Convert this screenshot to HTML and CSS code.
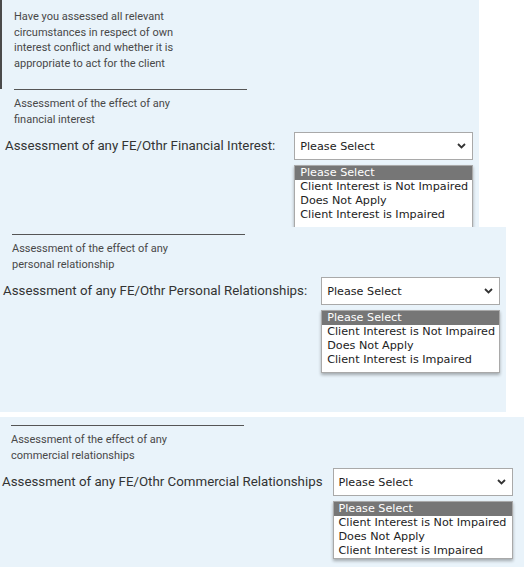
FILE: index.html
```html
<!DOCTYPE html>
<html lang="en">
<head>
    <meta charset="UTF-8">
    <meta name="viewport" content="width=device-width, initial-scale=1.0">
    <title>Conflict Assessment</title>
    <link rel="stylesheet" href="styles.css">
</head>
<body>
    <div class="panel panel-financial">
        <div class="intro">
            <p class="note">Have you assessed all relevant<br>circumstances in respect of own<br>interest conflict and whether it is<br>appropriate to act for the client</p>
        </div>
        <div class="rule"></div>
        <p class="note sub">Assessment of the effect of any<br>financial interest</p>
        <div class="field">
            <label class="field-label">Assessment of any FE/Othr Financial Interest:</label>
            <div class="picker">
                <div class="select">
                    <span>Please Select</span>
                    <svg class="chevron" width="9" height="6" viewBox="0 0 9 6"><polyline points="1,1 4.5,4.5 8,1" fill="none" stroke="#333" stroke-width="1.8"/></svg>
                </div>
                <ul class="listbox listbox-open">
                    <li class="active">Please Select</li>
                    <li>Client Interest is Not Impaired</li>
                    <li>Does Not Apply</li>
                    <li>Client Interest is Impaired</li>
                </ul>
            </div>
        </div>
    </div>

    <div class="panel panel-personal">
        <div class="rule"></div>
        <p class="note sub">Assessment of the effect of any<br>personal relationship</p>
        <div class="field">
            <label class="field-label">Assessment of any FE/Othr Personal Relationships:</label>
            <div class="picker">
                <div class="select">
                    <span>Please Select</span>
                    <svg class="chevron" width="9" height="6" viewBox="0 0 9 6"><polyline points="1,1 4.5,4.5 8,1" fill="none" stroke="#333" stroke-width="1.8"/></svg>
                </div>
                <ul class="listbox listbox-open">
                    <li class="active">Please Select</li>
                    <li>Client Interest is Not Impaired</li>
                    <li>Does Not Apply</li>
                    <li>Client Interest is Impaired</li>
                </ul>
            </div>
        </div>
    </div>

    <div class="panel panel-commercial">
        <div class="rule"></div>
        <p class="note sub">Assessment of the effect of any<br>commercial relationships</p>
        <div class="field">
            <label class="field-label">Assessment of any FE/Othr Commercial Relationships</label>
            <div class="picker">
                <div class="select">
                    <span>Please Select</span>
                    <svg class="chevron" width="9" height="6" viewBox="0 0 9 6"><polyline points="1,1 4.5,4.5 8,1" fill="none" stroke="#333" stroke-width="1.8"/></svg>
                </div>
                <ul class="listbox">
                    <li class="active">Please Select</li>
                    <li>Client Interest is Not Impaired</li>
                    <li>Does Not Apply</li>
                    <li>Client Interest is Impaired</li>
                </ul>
            </div>
        </div>
    </div>
</body>
</html>
```

FILE: styles.css
```css
body {
    margin: 0;
    background-color: #fff;
    font-family: Roboto, 'Liberation Sans', sans-serif;
}
.panel {
    background-color: #e9f3fa;
    box-sizing: border-box;
    overflow: hidden;
}
.panel-financial {
    width: 479px;
    height: 227px;
    padding: 0 0 0 5px;
}
.panel-personal {
    width: 506px;
    height: 185px;
    padding: 7px 0 0 3px;
}
.panel-commercial {
    width: 524px;
    height: 150px;
    margin-top: 5px;
    padding: 8px 0 0 2px;
}
.intro {
    margin-left: -5px;
    padding: 9px 0 0 12px;
    border-left: 2px solid #4a4a4a;
    height: 80px;
}
.note {
    margin: 0;
    font-size: 11px;
    line-height: 15.5px;
    color: #484848;
}
.rule {
    width: 233px;
    border-top: 1px solid #555;
    margin-left: 9px;
}
.sub {
    margin: 6px 0 0 9px;
}
.field {
    display: flex;
    align-items: flex-start;
    margin-top: 5px;
}
.field-label {
    font-size: 13.3px;
    color: #333;
    line-height: 28px;
}
.picker {
    width: 179px;
}
.panel-financial .picker {
    margin-left: 19px;
}
.panel-personal .picker {
    margin-left: 14px;
}
.panel-commercial .picker {
    margin-left: 10px;
    width: 180px;
}
.select {
    display: flex;
    align-items: center;
    justify-content: space-between;
    height: 28px;
    box-sizing: border-box;
    padding: 0 6px 0 5px;
    background-color: #fff;
    border: 1px solid #a9a9a9;
    font-family: 'DejaVu Sans', Verdana, sans-serif;
    font-size: 11.2px;
    color: #222;
}
.listbox {
    list-style: none;
    margin: 5px 0 0;
    padding: 0;
    background-color: #fff;
    border: 1px solid #a9a9a9;
    box-shadow: 0 2px 3px rgba(0, 0, 0, 0.3);
    font-family: 'DejaVu Sans', Verdana, sans-serif;
    font-size: 11.2px;
    color: #222;
}
.listbox-open {
    padding-bottom: 5px;
}
.listbox li {
    height: 14px;
    line-height: 14px;
    padding-left: 5px;
    white-space: nowrap;
}
.listbox li.active {
    background-color: #767676;
    color: #fff;
}
```
